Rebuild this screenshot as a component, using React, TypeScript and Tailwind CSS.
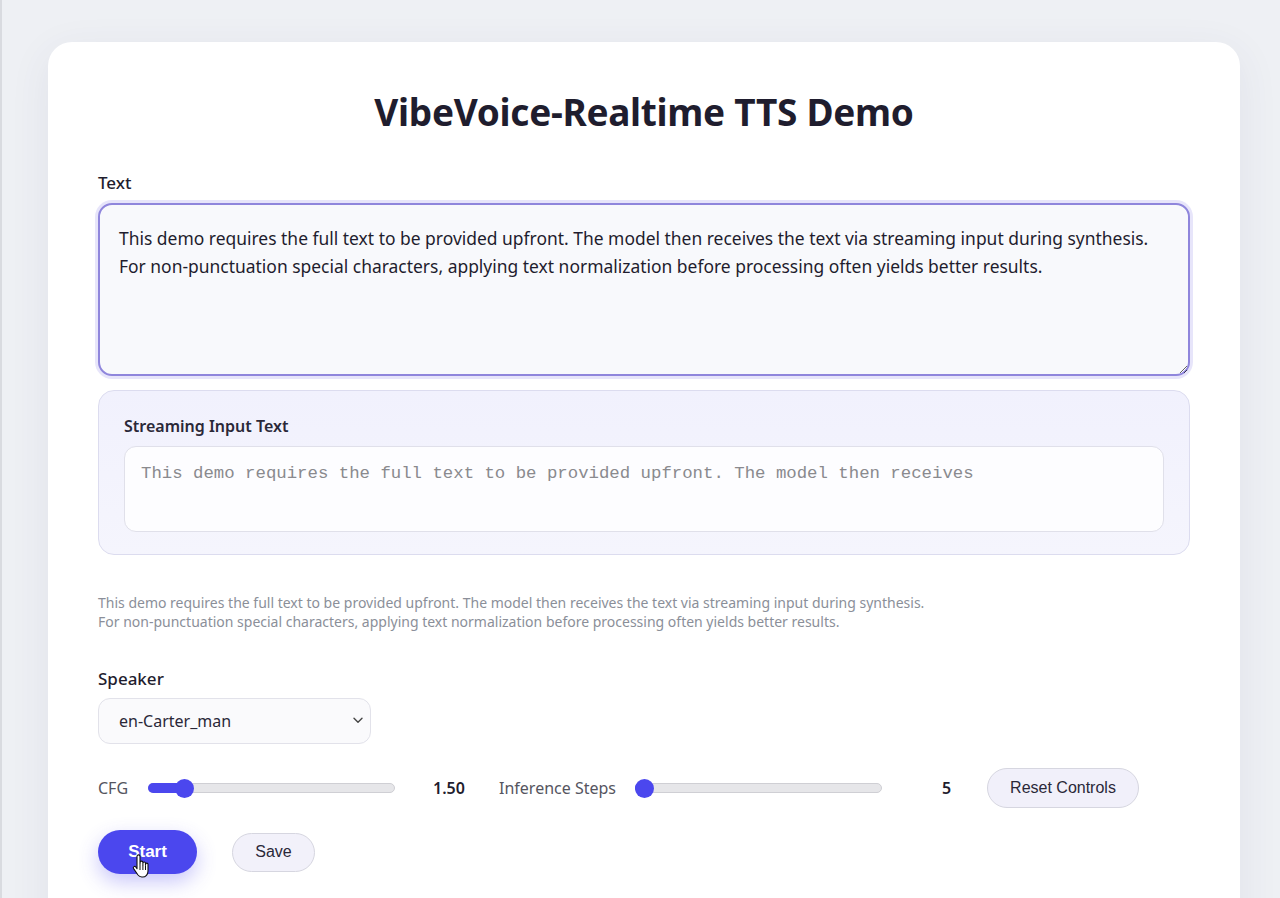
import React, { useState } from 'react';

const SANS = { fontFamily: '"Noto Sans", "Open Sans", sans-serif' };

// range track with a filled part up to the thumb; the thumb sits inside the track ends
const Slider: React.FC<{ value: number; min: number; max: number; step: number; onChange: (v: number) => void }> = ({ value, min, max, step, onChange }) => {
  const frac = (value - min) / (max - min);
  const thumbLeft = 9.5 + frac * (247 - 19);
  return (
    <div className="relative w-[247px] h-[19px] flex items-center">
      <div className="w-full h-[10px] rounded-full bg-[#e6e6e9] border border-[#cfcfd4]" />
      <div className="absolute left-0 h-[10px] rounded-full bg-[#4b47ee]" style={{ width: thumbLeft }} />
      <div className="absolute top-0 w-[19px] h-[19px] rounded-full bg-[#4b47ee] -ml-[9.5px]" style={{ left: thumbLeft }} />
      <input
        type="range"
        min={min}
        max={max}
        step={step}
        value={value}
        onChange={e => onChange(Number(e.target.value))}
        className="absolute inset-0 w-full opacity-0 cursor-pointer"
      />
    </div>
  );
};

const HandCursor: React.FC = () => (
  <svg width="20" height="26" viewBox="0 0 20 26" className="absolute left-[34px] top-[24px] pointer-events-none">
    <path
      d="M5 2.5c0-1 .7-1.6 1.5-1.6S8 1.5 8 2.5v8l.1-2c0-.9.6-1.4 1.4-1.4s1.4.5 1.4 1.4v2.2-1.4c0-.8.6-1.3 1.3-1.3s1.3.5 1.3 1.3v2l.1-1c0-.7.6-1.2 1.2-1.2s1.2.5 1.2 1.2V17c0 3.4-2.3 6-5.4 6H9.8c-1.8 0-3-.8-4-2.2L1.6 14.6c-.5-.8-.3-1.6.3-2s1.4-.3 1.9.4L5 14.7z"
      fill="#fff"
      stroke="#111"
      strokeWidth="1.1"
      strokeLinejoin="round"
    />
    <path d="M8 11v5M10.9 11v5M13.5 11.5v4.5" stroke="#111" strokeWidth="1" />
  </svg>
);

const App: React.FC = () => {
  const fullText =
    'This demo requires the full text to be provided upfront. The model then receives the text via streaming input during synthesis.\nFor non-punctuation special characters, applying text normalization before processing often yields better results.';
  const [text, setText] = useState(fullText);
  const [speaker, setSpeaker] = useState('en-Carter_man');
  const [cfg, setCfg] = useState(1.5);
  const [steps, setSteps] = useState(5);

  const resetControls = () => {
    setCfg(1.5);
    setSteps(5);
  };

  return (
    <div className="min-h-[898px] bg-[#eef0f4] border-l-2 border-[#d9dbe0] overflow-hidden" style={SANS}>
      <div className="w-[1192px] ml-[46px] mt-[42px] bg-white rounded-[24px] shadow-[0_10px_40px_rgba(60,60,110,0.08)] px-[50px] pt-[47px] pb-[80px]">
        <h1 className="text-center text-[37px] font-bold text-[#1f1d2e] tracking-[-0.3px] leading-[46px]">VibeVoice-Realtime TTS Demo</h1>

        <label className="block mt-[37px] mb-[9px] text-[17px] font-medium text-[#1f1d2e] leading-[22px]">Text</label>
        <textarea
          value={text}
          onChange={e => setText(e.target.value)}
          className="block w-full h-[173px] rounded-[14px] border-2 border-[#8f86dc] bg-[#f8f9fc] px-[19px] pt-[19px] pb-[20px] text-[17.45px] leading-[28px] text-[#1f1d2e] outline-none shadow-[0_0_0_3px_rgba(120,110,230,0.18)]"
        />

        <div className="mt-[14px] rounded-[16px] border border-[#dcdcef] bg-gradient-to-b from-[#f1f1fd] to-[#f5f5fd] px-[25px] pt-[24px] pb-[22px]">
          <div className="text-[16px] font-semibold text-[#2a2838] leading-[22px]">Streaming Input Text</div>
          <div className="mt-[9px] h-[86px] rounded-[12px] border border-[#e0e0ea] bg-[#fdfdff] px-[16px] pt-[16px] text-[17.35px] text-[#8a8a8e] leading-[22px]" style={{ fontFamily: '"Liberation Mono", monospace' }}>
            This demo requires the full text to be provided upfront. The model then receives
          </div>
        </div>

        <p className="mt-[38px] text-[14px] leading-[19px] text-[#8b8f99]">
          This demo requires the full text to be provided upfront. The model then receives the text via streaming input during synthesis.
          <br />
          For non-punctuation special characters, applying text normalization before processing often yields better results.
        </p>

        <label className="block mt-[37px] mb-[8px] text-[17px] font-medium text-[#1f1d2e] leading-[22px]">Speaker</label>
        <div className="relative w-[273px]">
          <select
            value={speaker}
            onChange={e => setSpeaker(e.target.value)}
            className="appearance-none w-full h-[46px] rounded-[12px] border border-[#e2e2ea] bg-[#fafafc] pl-[20px] pr-[32px] text-[16px] text-[#2a2838] outline-none"
          >
            <option>en-Carter_man</option>
            <option>en-Davis_man</option>
            <option>en-Emma_woman</option>
          </select>
          <svg className="absolute right-[8px] top-[19px] pointer-events-none" width="10" height="7" viewBox="0 0 10 7">
            <path d="M1 1.2l4 4 4-4" fill="none" stroke="#444" strokeWidth="1.4" strokeLinecap="round" strokeLinejoin="round" />
          </svg>
        </div>

        <div className="mt-[24px] flex items-center h-[40px]">
          <span className="text-[16px] text-[#555560] w-[50px]">CFG</span>
          <Slider value={cfg} min={1.3} max={3} step={0.05} onChange={setCfg} />
          <span className="ml-[38px] w-[32px] text-[16px] font-semibold text-[#1f1d2e]">{cfg.toFixed(2)}</span>
          <span className="ml-[34px] text-[16px] text-[#555560]">Inference Steps</span>
          <span className="ml-[19px]"><Slider value={steps} min={5} max={50} step={1} onChange={setSteps} /></span>
          <span className="ml-[60px] w-[10px] text-[16px] font-semibold text-[#1f1d2e]">{steps}</span>
          <button
            onClick={resetControls}
            className="ml-[35px] h-[40px] w-[152px] rounded-full border border-[#d6d6e0] bg-[#f1f0fa] text-[16px] text-[#2a2838]"
            style={{ fontFamily: '"Liberation Sans", Arial, sans-serif' }}
          >
            Reset Controls
          </button>
        </div>

        <div className="mt-[22px] flex items-center gap-[35px]" style={{ fontFamily: '"Liberation Sans", Arial, sans-serif' }}>
          <div className="relative">
            <button className="h-[44px] w-[99px] rounded-full bg-[#4b47ee] text-white text-[17px] font-bold shadow-[0_8px_20px_rgba(75,71,238,0.3)]">Start</button>
            <HandCursor />
          </div>
          <button className="h-[39px] w-[83px] rounded-full border border-[#d6d6e0] bg-[#f2f1fa] text-[16px] text-[#2a2838]">Save</button>
        </div>
      </div>
    </div>
  );
};

export default App;
